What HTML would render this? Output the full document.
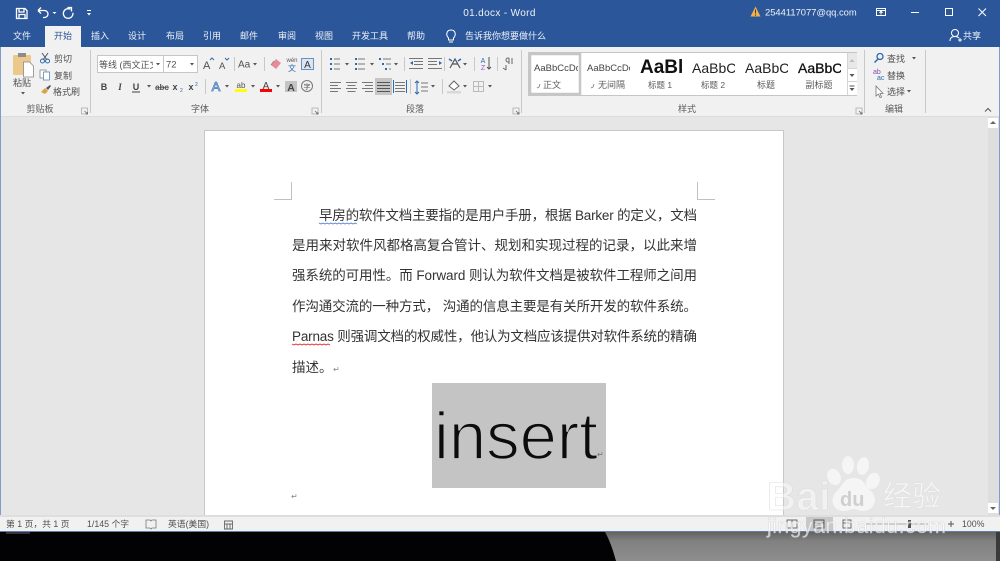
<!DOCTYPE html>
<html lang="zh"><head><meta charset="utf-8"><title>01.docx - Word</title>
<style>
html,body{margin:0;padding:0;width:1000px;height:561px;overflow:hidden;background:#000}
svg{display:block}
#root{filter:blur(.35px)}
text{font-family:"Liberation Sans","Noto Sans CJK SC",sans-serif}
.w{fill:#fff;font-size:9px;opacity:.92}
.k{fill:#505050;font-size:9px}
.s{fill:#5c5c5c;font-size:9px}
.b{fill:#333;font-size:13.5px}
.sep{stroke:#c8c8c8;stroke-width:1}
</style></head><body>
<svg id="root" width="1000" height="561" viewBox="0 0 1000 561" xmlns="http://www.w3.org/2000/svg">
<defs>
<linearGradient id="gr" x1="0" y1="0" x2="0" y2="1"><stop offset="0" stop-color="#626262"/><stop offset=".3" stop-color="#808080"/><stop offset="1" stop-color="#8e8e8e"/></linearGradient>
<path id="v" d="M-2 -1h4l-2 2.500z" fill="#555"/>
<g id="launch"><path d="M-3 -3h6v6h-6z" fill="none" stroke="#aaa" stroke-width=".8"/><path d="M0 0l3 3M1 3h2V1" stroke="#666" fill="none" stroke-width=".8"/></g>
</defs>

<!-- window -->
<rect width="1000" height="47" fill="#2b579a"/>
<rect y="47" width="1000" height="70" fill="#f1f1f1"/>
<rect y="116" width="1000" height="1" fill="#dcdcdc"/>
<rect y="117" width="1000" height="399" fill="#e6e6e6"/>
<rect x="0" y="47" width="1" height="485" fill="#7f9ccb"/>

<!-- title bar -->
<path d="M16.500 8.500h8.500l2 2v8h-10.500z M19 8.500v3.500h5v-3.500 M19 18.500v-4h6v4" fill="none" stroke="#fff" stroke-width="1.300"/>
<path d="M38 10.500l3-3M38 10.500l3 3M38 10.500h6.500a3.500 3.500 0 0 1 0 7h-1.500" fill="none" stroke="#fff" stroke-width="1.300"/>
<path d="M52.500 12h4l-2 2z" fill="#fff"/>
<path d="M70.500 9.300a4.800 4.800 0 1 0 2.400 3.500M67.500 7.500h4v4" fill="none" stroke="#fff" stroke-width="1.300"/>
<path d="M87 10h4v1h-4zM87 13h4l-2 2.500z" fill="#fff"/>
<text x="499.500" y="16" text-anchor="middle" class="w" style="font-size:10px;letter-spacing:.35px">01.docx  -  Word</text>
<path d="M750.500 16.500l5-10 5 10z" fill="#f0b04a"/><path d="M755.500 9.500v4M755.500 14.500v1.200" stroke="#553a10" stroke-width="1"/>
<text x="765" y="15.500" class="w" style="font-size:9.400px">2544117077@qq.com</text>
<path d="M876.500 8.500h9v7h-9z M876.500 10.500h9" fill="none" stroke="#fff" stroke-width="1"/><path d="M881 14.500v-3M879.500 12.800l1.500-1.800 1.500 1.800" fill="none" stroke="#fff" stroke-width="1"/>
<path d="M911 12.500h8" stroke="#fff" stroke-width="1"/>
<rect x="945.500" y="8.500" width="7" height="7" fill="none" stroke="#fff" stroke-width="1"/>
<path d="M978.500 8.500l7.500 7.500M986 8.500l-7.500 7.500" stroke="#fff" stroke-width="1"/>

<!-- tabs -->
<rect x="45" y="26" width="36" height="22" fill="#f1f1f1"/>
<g text-anchor="middle">
<text x="22" y="39" class="w">文件</text>
<text x="100" y="39" class="w">插入</text>
<text x="137" y="39" class="w">设计</text>
<text x="175" y="39" class="w">布局</text>
<text x="212" y="39" class="w">引用</text>
<text x="249" y="39" class="w">邮件</text>
<text x="287" y="39" class="w">审阅</text>
<text x="324" y="39" class="w">视图</text>
<text x="370" y="39" class="w">开发工具</text>
<text x="416" y="39" class="w">帮助</text>
<text x="505.500" y="39" class="w">告诉我你想要做什么</text>
</g>
<text x="63" y="39" text-anchor="middle" style="font-size:9px;fill:#2b579a">开始</text>
<path d="M448.500 38c-3-3-2-8 2.500-8s5.500 5 2.500 8v2h-5z M449 42h4" fill="none" stroke="#fff" stroke-width="1"/>
<circle cx="955" cy="33" r="3.500" fill="none" stroke="#fff" stroke-width="1"/><path d="M950 41c0-3 2-4.500 5-4.500 2 0 3 .5 4 1.500M958 40h4M960 38v4" fill="none" stroke="#fff" stroke-width="1"/>
<text x="963" y="39" class="w">共享</text>

<!-- separators -->
<g class="sep">
<path d="M90.500 50v63M321.500 50v63M521.500 50v63M864.500 50v63M925.500 50v63"/>
<path d="M234.500 57v14M264.500 57v14M205.500 79v15M404.500 57v14M444.500 57v14M474.500 57v14M497.500 57v14M410.500 79v15M442.500 79v15"/>
</g>

<!-- clipboard -->
<rect x="13" y="55" width="18" height="20" rx="1" fill="#ecc98a"/>
<rect x="18" y="53" width="8" height="4" fill="#8c8c8c"/>
<path d="M23.500 62h6l4 4v11h-10z" fill="#fff" stroke="#888" stroke-width=".8"/>
<text x="22" y="86" text-anchor="middle" class="k">粘贴</text>
<use href="#v" x="23" y="93"/>
<path d="M42 53l5 7M48 53l-5 7" stroke="#555" stroke-width="1"/><circle cx="42.500" cy="61" r="2" fill="none" stroke="#2b6cb0"/><circle cx="47.500" cy="61" r="2" fill="none" stroke="#2b6cb0"/>
<text x="54" y="62" class="k">剪切</text>
<rect x="40" y="70" width="6" height="8" fill="#fff" stroke="#888" stroke-width=".8"/><rect x="43.500" y="72" width="6" height="8" fill="#fff" stroke="#5a88bb" stroke-width=".8"/>
<text x="54" y="79" class="k">复制</text>
<path d="M41 92l4-4 3 3-3 3z" fill="#d9a441"/><path d="M46 88l4-3 1 1-3 4z" fill="#555"/>
<text x="53" y="95" class="k">格式刷</text>
<text x="40" y="112" text-anchor="middle" class="s">剪贴板</text>
<use href="#launch" x="84.500" y="111"/>

<!-- font -->
<rect x="97.500" y="55.500" width="66" height="17" fill="#fff" stroke="#c6c6c6"/>
<rect x="163.500" y="55.500" width="34" height="17" fill="#fff" stroke="#c6c6c6"/>
<svg x="98" y="56" width="55" height="16"><text x="1" y="12" class="k" style="font-size:9px">等线 (西文正文)</text></svg>
<use href="#v" x="158" y="64"/>
<text x="166" y="67.500" class="k" style="font-size:9.500px">72</text>
<use href="#v" x="192" y="64"/>
<text x="203" y="69" class="k" style="font-size:11px">A</text><path d="M210 60l2-2 2 2" fill="none" stroke="#2b6cb0"/>
<text x="219" y="69" class="k" style="font-size:9.500px">A</text><path d="M225 58l2 2 2-2" fill="none" stroke="#2b6cb0"/>
<text x="238" y="67.500" class="k" style="font-size:10px">Aa</text><use href="#v" x="255" y="64"/>
<path d="M271 65l5-6 5 4-5 6z" fill="#e88a98"/><path d="M271 65l3-4" stroke="#888"/>
<text x="292" y="62" text-anchor="middle" style="font-size:6px;fill:#555">wén</text><text x="292" y="71" text-anchor="middle" style="font-size:8px;fill:#2b6cb0">文</text>
<rect x="301.500" y="58.500" width="12" height="11" fill="#dbe6f4" stroke="#6a8fc0"/><text x="307.500" y="68" text-anchor="middle" style="font-size:10px;fill:#333">A</text>
<g text-anchor="middle">
<text x="104" y="90" style="font-size:9px;fill:#444;font-weight:bold">B</text>
<text x="120" y="90" style="font-size:9px;fill:#444;font-family:'Liberation Serif';font-style:italic;font-weight:bold">I</text>
<text x="136" y="90" style="font-size:9px;fill:#444;font-weight:bold">U</text>
<text x="162" y="90" style="font-size:8px;fill:#555;font-weight:bold;text-decoration:line-through">abc</text>
<text x="175" y="90" style="font-size:9px;fill:#444;font-weight:bold">x</text>
<text x="191" y="90" style="font-size:9px;fill:#444;font-weight:bold">x</text>
</g>
<path d="M132 92h8" stroke="#444"/>
<text x="180" y="92" style="font-size:5px;fill:#2b6cb0">2</text><text x="195" y="86" style="font-size:5px;fill:#2b6cb0">2</text>
<use href="#v" x="149" y="86"/>
<text x="216" y="91" text-anchor="middle" style="font-size:13px;fill:#dbe6f4;stroke:#4a7fc1;stroke-width:.8">A</text><use href="#v" x="227" y="86"/>
<text x="241" y="88" text-anchor="middle" style="font-size:8px;fill:#555">ab</text><rect x="235" y="89" width="12" height="3" fill="#ffff00"/><use href="#v" x="253" y="86"/>
<text x="266" y="89" text-anchor="middle" style="font-size:10px;fill:#444">A</text><rect x="260" y="89" width="12" height="3" fill="#f00"/><use href="#v" x="278" y="86"/>
<rect x="285" y="81" width="12" height="11" fill="#c4c4c4"/><text x="291" y="91" text-anchor="middle" style="font-size:10.500px;fill:#444;font-weight:bold">A</text>
<circle cx="307" cy="86" r="5.500" fill="none" stroke="#777"/><text x="307" y="89" text-anchor="middle" style="font-size:7px;fill:#555">字</text>
<text x="200" y="112" text-anchor="middle" class="s">字体</text>
<use href="#launch" x="315" y="111"/>

<!-- paragraph row 1 -->
<g transform="translate(0 -1)">
<path d="M330 59h2v2h-2zM330 64h2v2h-2zM330 69h2v2h-2z" fill="#2b6cb0"/><path d="M334 60h6M334 65h6M334 70h6" stroke="#777"/><use href="#v" x="347" y="65"/>
<path d="M355 59h2v2h-2zM355 64h2v2h-2zM355 69h2v2h-2z" fill="#2b6cb0"/><path d="M358 60h7M358 65h7M358 70h7" stroke="#777"/><use href="#v" x="372" y="65"/>
<path d="M379 59h2v2h-2zM382 64h2v2h-2zM385 69h2v2h-2z" fill="#2b6cb0"/><path d="M383 60h8M386 65h5M389 70h2" stroke="#777"/><use href="#v" x="396" y="65"/>
<path d="M409 59.500h14M414 62.500h9M414 65.500h9M409 69.500h14" stroke="#777"/><path d="M413 62v4l-3-2z" fill="#2b6cb0"/>
<path d="M428 59.500h14M428 62.500h9M428 65.500h9M428 69.500h14" stroke="#777"/><path d="M439 62v4l3-2z" fill="#2b6cb0"/>
<path d="M450 69l5-9 5 9M452 65h6" fill="none" stroke="#555" stroke-width="1.200"/><path d="M449 60l3 2M461 60l-3 2" stroke="#2b6cb0" stroke-width="1.500"/><use href="#v" x="465" y="65"/>
<text x="483" y="64" text-anchor="middle" style="font-size:7px;fill:#2b6cb0">A</text><text x="483" y="71" text-anchor="middle" style="font-size:7px;fill:#a050c0">Z</text><path d="M489 58v12M487 68l2 2 2-2" fill="none" stroke="#555"/>
<path d="M512 59v6M509 59v6M509 59h-1a2 2 0 0 0 0 4h1M506 66v5M503 69l3 2" fill="none" stroke="#666"/>
</g>
<!-- paragraph row 2 -->
<path d="M330 82.500h11M330 85.500h8M330 88.500h11M330 91.500h8" stroke="#777"/>
<path d="M346 82.500h11M347.500 85.500h8M346 88.500h11M347.500 91.500h8" stroke="#777"/>
<path d="M362 82.500h11M365 85.500h8M362 88.500h11M365 91.500h8" stroke="#777"/>
<rect x="375" y="78" width="17" height="17" fill="#c6c6c6"/>
<path d="M377 82.500h13M377 85.500h13M377 88.500h13M377 91.500h13" stroke="#555"/>
<path d="M395 82.500h10M395 85.500h10M395 88.500h10M395 91.500h10" stroke="#777"/><path d="M393.500 80v13M406.500 80v13" stroke="#2b6cb0"/>
<path d="M417 81v13M415 83l2-2 2 2M415 92l2 2 2-2" fill="none" stroke="#2b6cb0"/><path d="M421 83h7M421 87h7M421 91h7" stroke="#777"/><use href="#v" x="433" y="86"/>
<path d="M449 86l5-5 5 5-5 4z" fill="#fff" stroke="#666"/><rect x="447" y="91" width="14" height="2.500" fill="#d8d8d8"/><use href="#v" x="465" y="86"/>
<rect x="473.500" y="81.500" width="10" height="10" fill="none" stroke="#bbb"/><path d="M478.500 81v11M473 86.500h11" stroke="#bbb"/><use href="#v" x="490" y="86"/>
<text x="415" y="112" text-anchor="middle" class="s">段落</text>
<use href="#launch" x="516" y="111"/>

<!-- styles -->
<rect x="528.500" y="52.500" width="328" height="43" fill="#fff" stroke="#c6c6c6"/>
<rect x="530" y="54" width="50" height="40" fill="#fff" stroke="#c6c6c6" stroke-width="2.500"/>
<svg x="533" y="58" width="45" height="20"><text x="1" y="13" style="font-size:9.500px;fill:#444">AaBbCcDd</text></svg>
<svg x="586" y="58" width="44" height="20"><text x="1" y="13" style="font-size:9.500px;fill:#444">AaBbCcDd</text></svg>
<svg x="639" y="54" width="43" height="24"><text x="1" y="19" style="font-size:19px;font-weight:bold;fill:#111">AaBbC</text></svg>
<svg x="691" y="56" width="44" height="22"><text x="1" y="17" style="font-size:14px;fill:#222">AaBbC</text></svg>
<svg x="744" y="56" width="44" height="22"><text x="1" y="17" style="font-size:14px;fill:#222">AaBbC</text></svg>
<svg x="797" y="56" width="44" height="22"><text x="1" y="17" style="font-size:14px;fill:#111;stroke:#111;stroke-width:.3">AaBbC</text></svg>
<text x="543" y="88" class="s">正文</text><path d="M540 84l-1 3-2 1" fill="none" stroke="#777" stroke-width=".8"/>
<text x="598" y="88" class="s">无间隔</text><path d="M594 84l-1 3-2 1" fill="none" stroke="#777" stroke-width=".8"/>
<text x="660" y="88" text-anchor="middle" class="s" style="font-size:8.500px">标题 1</text>
<text x="713" y="88" text-anchor="middle" class="s" style="font-size:8.500px">标题 2</text>
<text x="766" y="88" text-anchor="middle" class="s">标题</text>
<text x="819" y="88" text-anchor="middle" class="s">副标题</text>
<rect x="847" y="53" width="10" height="42" fill="#fff"/>
<rect x="847" y="53" width="10" height="15" fill="#e8e8e8"/>
<path d="M847.500 53v42M847 68.500h10M847 81.500h10" stroke="#d4d4d4"/>
<path d="M852 59l-2.500 3h5z" fill="#bbb"/><path d="M849.500 74h5l-2.500 3z" fill="#555"/><path d="M849.500 88h5l-2.500 3z" fill="#555"/><path d="M849.500 86h5" stroke="#555"/>
<text x="687" y="112" text-anchor="middle" class="s">样式</text>
<use href="#launch" x="859" y="111"/>

<!-- editing -->
<circle cx="880" cy="56.500" r="3" fill="none" stroke="#2b6cb0" stroke-width="1.300"/><path d="M878 59l-3.500 3.500" stroke="#2b6cb0" stroke-width="1.500"/>
<text x="887" y="62" class="k">查找</text><use href="#v" x="914" y="58"/>
<text x="873" y="74" style="font-size:7px;fill:#8050b0">ab</text><text x="877" y="80" style="font-size:7px;fill:#2b6cb0">ac</text>
<text x="887" y="79" class="k">替换</text>
<path d="M876 86v10l2.500-2 1.500 3.500 1.500-.5-1.500-3.500h3z" fill="#fff" stroke="#777" stroke-width=".8"/>
<text x="887" y="95" class="k">选择</text><use href="#v" x="909" y="91"/>
<text x="894" y="112" text-anchor="middle" class="s">编辑</text>
<path d="M985 111.500l3-3 3 3" fill="none" stroke="#555"/>

<!-- scrollbar -->
<rect x="988" y="117" width="11" height="399" fill="#dedede"/>
<rect x="988" y="118" width="10" height="10" fill="#fff"/>
<path d="M993 121l-3 3h6z" fill="#666"/>
<rect x="988" y="503" width="10" height="10" fill="#fff"/>
<path d="M990 507h6l-3 3z" fill="#666"/>
<rect x="999" y="47" width="1" height="485" fill="#7f9ccb"/>

<!-- page -->
<rect x="204.500" y="130.500" width="579" height="390" fill="#fff" stroke="#c8c8c8"/>
<path d="M274 199.500h17.500V182M697.500 182v17.500H715" fill="none" stroke="#c0c0c0"/>
<text x="319" y="220" class="b" textLength="378" lengthAdjust="spacing">早房的软件文档主要指的是用户手册，根据 Barker 的定义，文档</text>
<text x="292" y="250" class="b" textLength="405" lengthAdjust="spacing">是用来对软件风都格高复合管计、规划和实现过程的记录，以此来增</text>
<text x="292" y="280" class="b" textLength="405" lengthAdjust="spacing">强系统的可用性。而 Forward 则认为软件文档是被软件工程师之间用</text>
<text x="292" y="311" class="b" textLength="405" lengthAdjust="spacing">作沟通交流的一种方式， 沟通的信息主要是有关所开发的软件系统。</text>
<text x="292" y="341" class="b" textLength="405" lengthAdjust="spacing">Parnas 则强调文档的权威性，他认为文档应该提供对软件系统的精确</text>
<text x="292" y="372" class="b">描述。</text>
<text x="333" y="372" style="font-size:8px;fill:#888">↵</text>
<path d="M319 223l2 1 2-1 2 1 2-1 2 1 2-1 2 1 2-1 2 1 2-1 2 1 2-1 2 1 2-1 2 1 2-1 2 1 2-1 2 1" fill="none" stroke="#4a7fd0" stroke-width=".8"/>
<path d="M292 344l2 1 2-1 2 1 2-1 2 1 2-1 2 1 2-1 2 1 2-1 2 1 2-1 2 1 2-1 2 1 2-1 2 1 2-1 2 1" fill="none" stroke="#e02020" stroke-width=".8"/>
<rect x="432" y="383" width="174" height="105" fill="#c4c4c4"/>
<text x="434" y="459" style="font-size:67px;fill:#0c0c0c;stroke:#c4c4c4;stroke-width:1.700px">insert</text>
<text x="597" y="457" style="font-size:8px;fill:#777">↵</text>
<text x="291" y="499" style="font-size:8px;fill:#888">↵</text>

<!-- status bar -->
<rect y="515" width="1000" height="2" fill="#dedede"/>
<rect y="517" width="1000" height="15" fill="#f1f1f1"/>
<rect y="531" width="1000" height="1" fill="#5f7fae"/>
<text x="6" y="527" class="k" style="font-size:8.800px">第 1 页，共 1 页</text>
<text x="87" y="527" class="k" style="font-size:8.800px">1/145 个字</text>
<path d="M146 520h4l1 1 1-1h4v8h-4l-1 1-1-1h-4z" fill="none" stroke="#777" stroke-width=".8"/>
<text x="168" y="527" class="k" style="font-size:8.800px">英语(美国)</text>
<path d="M224.500 521h8v8h-8zM224.500 524h8M227 524v5M230 524v5" fill="none" stroke="#666" stroke-width=".9"/>
<rect x="806" y="517" width="27" height="14" fill="#c8c8c8"/>
<path d="M787 520h10v8h-10zM792 520v8" fill="none" stroke="#666" stroke-width=".9"/>
<path d="M814 520h10v8h-10zM814 523h10" fill="none" stroke="#555" stroke-width=".9"/>
<path d="M843 520h8v8h-8zM843 523h8" fill="none" stroke="#666" stroke-width=".9"/>
<path d="M866 524h62" stroke="#aaa"/><rect x="908" y="520" width="3" height="8" fill="#555"/>
<path d="M948 524h6M951 521v6" stroke="#555"/>
<text x="962" y="527" class="k" style="font-size:8.800px">100%</text>

<!-- bottom desktop -->
<rect y="532" width="1000" height="29" fill="#020204"/>
<path d="M605 532H1000V561H616C613 550 610 541 605 532Z" fill="url(#gr)"/>
<rect x="996" y="532" width="4" height="29" fill="#3a3a3a"/>
<path d="M6 532h24v2H6z" fill="#31343c"/>

<!-- watermark -->
<g fill="#fff" fill-opacity=".6">
<ellipse cx="834" cy="477" rx="6.500" ry="8.500" transform="rotate(-25 834 477)"/>
<ellipse cx="848" cy="465" rx="6" ry="9"/>
<ellipse cx="863" cy="466" rx="6" ry="9" transform="rotate(10 863 466)"/>
<ellipse cx="873" cy="481" rx="6.500" ry="8.500" transform="rotate(25 873 481)"/>
<path d="M854 478c10 0 12 9 17 13 8 8 3 20-8 20-4 0-6-2-9-2s-6 2-10 2c-11 0-15-11-8-19 6-5 7-14 18-14z"/>
<text x="767" y="510" style="font-size:40px;font-weight:bold;letter-spacing:.5px;stroke:#d4d4d4;stroke-width:.6px;stroke-opacity:.7" fill-opacity=".45">Bai</text>
<text x="883" y="506" style="font-size:29px;stroke:#ddd;stroke-width:.4px" fill-opacity=".65">经验</text>
<text x="767" y="533" style="font-size:21px;letter-spacing:.6px;stroke:#c8c8c8;stroke-width:.3px" fill-opacity=".65">jingyan.baidu.com</text>
</g>
<text x="840" y="506" style="font-size:20px;font-weight:bold;fill:#cfcfcf">du</text>
</svg>
</body></html>
